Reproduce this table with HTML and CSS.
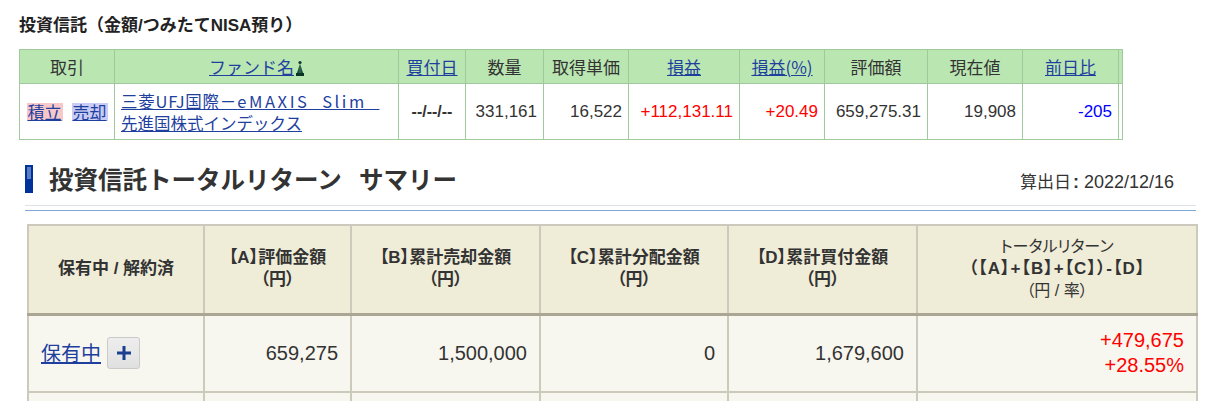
FILE: index.html
```html
<!DOCTYPE html>
<html lang="ja">
<head>
<meta charset="utf-8">
<title>投資信託</title>
<link rel="stylesheet" href="styles.css">
</head>
<body>
<div class="page">
  <section class="holdings">
    <h2 class="sec-title">投資信託（金額/つみたてNISA預り）</h2>
    <table class="hold-table">
      <colgroup>
        <col style="width:95px"><col style="width:284px"><col style="width:67px"><col style="width:78px"><col style="width:85px"><col style="width:111px"><col style="width:85px"><col style="width:103px"><col style="width:95px"><col style="width:96px"><col style="width:4px">
      </colgroup>
      <thead>
        <tr>
          <th>取引</th>
          <th><a href="#" class="lnk">ファンド名</a><svg class="sort-icon" width="8" height="16" viewBox="0 0 8 16"><defs><linearGradient id="cone" x1="0" x2="1" y1="0" y2="0"><stop offset="0" stop-color="#0a3426"/><stop offset="0.5" stop-color="#2f6a52"/><stop offset="1" stop-color="#0a3426"/></linearGradient></defs><circle cx="4" cy="2.5" r="1.6" fill="#0d3a2c"/><path d="M4 3.5 L7 13 H1 Z" fill="url(#cone)"/><rect x="0" y="13" width="8" height="3" fill="#0a3426"/></svg></th>
          <th><a href="#" class="lnk">買付日</a></th>
          <th>数量</th>
          <th>取得単価</th>
          <th><a href="#" class="lnk">損益</a></th>
          <th><a href="#" class="lnk">損益(%)</a></th>
          <th>評価額</th>
          <th>現在値</th>
          <th><a href="#" class="lnk">前日比</a></th>
          <th class="stub"></th>
        </tr>
      </thead>
      <tbody>
        <tr>
          <td class="c-trade"><a href="#" class="lnk tag tag-buy">積立</a><a href="#" class="lnk tag tag-sell">売却</a></td>
          <td class="c-name"><a href="#" class="lnk"><span class="name-cjk">三菱UFJ国際－</span><span class="name-latin">eMAXIS&nbsp;&nbsp;Slim&nbsp;&nbsp;</span><br>先進国株式インデックス</a></td>
          <td class="c-date">--/--/--</td>
          <td class="num">331,161</td>
          <td class="num">16,522</td>
          <td class="num up">+112,131.11</td>
          <td class="num up">+20.49</td>
          <td class="num">659,275.31</td>
          <td class="num">19,908</td>
          <td class="num down">-205</td>
          <td class="stub"></td>
        </tr>
      </tbody>
    </table>
  </section>

  <section class="summary">
    <div class="summary-head">
      <h2 class="summary-title"><span class="bar"></span><span>投資信託トータルリターン&ensp;&thinsp;サマリー</span></h2>
      <div class="calc-date"><span class="date-label">算出日</span><span class="colon">:</span>2022/12/16</div>
    </div>
    <div class="rule"></div>
    <table class="sum-table">
      <colgroup>
        <col style="width:176px"><col style="width:147px"><col style="width:189px"><col style="width:188px"><col style="width:189px"><col style="width:280px">
      </colgroup>
      <thead>
        <tr>
          <th><b>保有中 / 解約済</b></th>
          <th><b>【A】評価金額<br>（円）</b></th>
          <th><b>【B】累計売却金額<br>（円）</b></th>
          <th><b>【C】累計分配金額<br>（円）</b></th>
          <th><b>【D】累計買付金額<br>（円）</b></th>
          <th><span class="thin">トータルリターン</span><br><b class="formula">（【A】+【B】+【C】）-【D】</b><br><span class="thin">（円 / 率）</span></th>
        </tr>
      </thead>
      <tbody>
        <tr class="row-main">
          <td class="c-status"><a href="#" class="lnk big">保有中</a><button class="plus" type="button" aria-label="展開"><svg width="14" height="14" viewBox="0 0 14 14"><rect x="5.5" y="0" width="3" height="14" fill="#1a3f8f"/><rect x="0" y="5.5" width="14" height="3" fill="#1a3f8f"/></svg></button></td>
          <td class="snum">659,275</td>
          <td class="snum">1,500,000</td>
          <td class="snum">0</td>
          <td class="snum">1,679,600</td>
          <td class="snum up">+479,675<br>+28.55%</td>
        </tr>
        <tr class="row-next">
          <td></td><td></td><td></td><td></td><td></td><td></td>
        </tr>
      </tbody>
    </table>
  </section>
</div>
</body>
</html>
```

FILE: styles.css
```css
* { box-sizing: border-box; }

html, body {
  margin: 0;
  padding: 0;
  background: #ffffff;
}

body {
  font-family: "Liberation Sans", "Noto Sans CJK JP", sans-serif;
  color: #333333;
  overflow: hidden;
}

.page {
  padding: 16px 0 0 19px;
  width: 1217px;
}

.lnk {
  color: #1f3f9f;
  text-decoration: underline;
}

/* ---------- holdings table ---------- */
.sec-title {
  margin: 0;
  font-size: 17px;
  line-height: 20px;
  font-weight: bold;
  color: #222222;
  font-family: "Liberation Sans", "Noto Sans CJK JP", sans-serif;
}

.hold-table {
  margin-top: 13px;
  width: 1103px;
  table-layout: fixed;
  border-collapse: collapse;
  font-size: 16px;
}

.hold-table th,
.hold-table td {
  border: 1px solid #a2c89d;
  padding: 0;
}

.hold-table th {
  height: 34px;
  background: #bae6b2;
  font-weight: normal;
  text-align: center;
  color: #333333;
  font-family: "Noto Sans CJK JP", sans-serif;
  font-size: 17px;
  line-height: 20px;
  white-space: nowrap;
}

.sort-icon {
  vertical-align: -2px;
  margin-left: 2px;
}

.hold-table td {
  height: 56px;
  background: #ffffff;
  vertical-align: middle;
}

.hold-table .stub {
  padding: 0;
}

.c-trade {
  text-align: center;
  font-family: "Noto Sans CJK JP", sans-serif;
  white-space: nowrap;
}

.tag {
  display: inline-block;
  font-size: 17px;
  line-height: 18px;
  padding: 0 1px;
}

.tag-buy { background: #f7c8c9; }
.tag-sell { background: #c9cdf5; margin-left: 9px; }

.c-name {
  padding: 0 6px !important;
  font-family: "Noto Sans CJK JP", sans-serif;
  font-size: 16.5px;
  line-height: 22px;
  white-space: nowrap;
}

.name-cjk {
  letter-spacing: 0.8px;
}

.name-latin {
  letter-spacing: 2.6px;
}

.c-date {
  text-align: center;
  font-weight: bold;
  font-size: 16px;
}

.num {
  text-align: right;
  padding-right: 6px !important;
  font-size: 17px;
  white-space: nowrap;
}

.up { color: #ff0000; }
.down { color: #0000ff; }

/* ---------- summary ---------- */
.summary {
  margin-top: 25px;
  margin-left: 6px;
  width: 1171px;
}

.summary-head {
  display: flex;
  justify-content: space-between;
  align-items: flex-end;
  height: 28px;
}

.summary-title {
  margin: 0;
  display: flex;
  align-items: center;
  gap: 16px;
  font-size: 24.5px;
  line-height: 28px;
  font-weight: bold;
  color: #333333;
  font-family: "Noto Sans CJK JP", sans-serif;
  white-space: pre;
}

.bar {
  display: block;
  width: 8px;
  height: 28px;
  background: linear-gradient(#5a7ec3, #5a7ec3) 2px 2px / 4px 12px no-repeat, #003399;
}

.calc-date {
  font-size: 18px;
  line-height: 21px;
  padding-right: 22px;
  color: #333333;
}

.date-label {
  font-size: 17px;
  font-family: "Noto Sans CJK JP", sans-serif;
}

.colon {
  font-weight: bold;
  margin: 0 5px 0 2px;
}

.rule {
  margin-top: 12px;
  height: 6px;
  border-top: 1px solid #dde1e8;
  border-bottom: 1px solid #7ea7dc;
}

.sum-table {
  margin-top: 13px;
  margin-left: 2px;
  width: 1169px;
  table-layout: fixed;
  border-collapse: collapse;
}

.sum-table th,
.sum-table td {
  border: 2px solid #cdc9bd;
  padding: 0;
}

.sum-table th {
  height: 89px;
  background: #efecd7;
  font-size: 17px;
  line-height: 22px;
  font-weight: normal;
  text-align: center;
  vertical-align: middle;
  color: #333333;
  border-bottom: 3px solid #aaa693;
  font-family: "Liberation Sans", "Noto Sans CJK JP", sans-serif;
  font-feature-settings: "palt";
}

.sum-table th b {
  font-weight: bold;
}

.sum-table th .formula {
  letter-spacing: 1px;
}

.sum-table th .thin {
  font-size: 16px;
}

.sum-table td {
  background: #f8f7ef;
  vertical-align: middle;
}

.row-main td {
  height: 78px;
}

.row-next td {
  height: 60px;
}

.c-status {
  padding-left: 12px !important;
  white-space: nowrap;
}

.big {
  font-size: 20px;
  line-height: 26px;
  font-family: "Noto Sans CJK JP", sans-serif;
  vertical-align: middle;
}

.plus {
  display: inline-flex;
  align-items: center;
  justify-content: center;
  width: 33px;
  height: 32px;
  margin-left: 6px;
  padding: 0;
  background: linear-gradient(#eeeeee, #e0e0e0);
  border: 1px solid #cacaca;
  border-radius: 3px;
  vertical-align: middle;
}

.snum {
  text-align: right;
  padding-right: 12px !important;
  font-size: 20px;
  line-height: 25px;
  white-space: nowrap;
}
```
